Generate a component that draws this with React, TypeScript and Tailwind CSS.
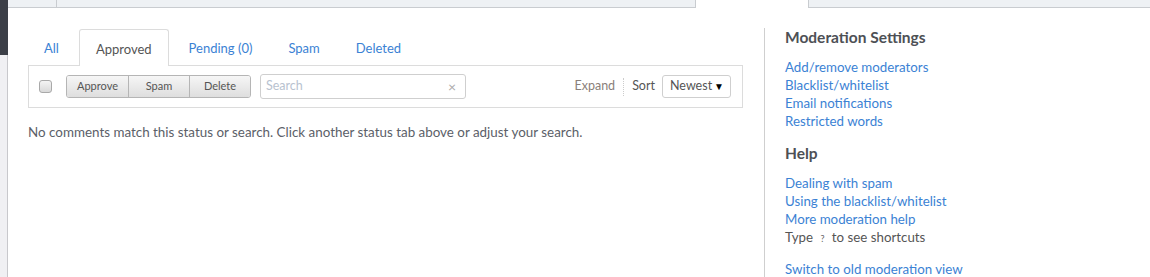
const font = { fontFamily: "Lato, 'Open Sans', sans-serif" }

function Tab({ label, active }: { label: string; active?: boolean }) {
  if (active)
    return (
      <div className="-mb-px flex h-[37px] items-center rounded-t-[3px] border border-b-0 border-[#dcdcdc] bg-white px-4 pt-[3px] text-[13px] text-[#555]">
        {label}
      </div>
    )
  return <div className="flex h-[36px] items-center px-4 pt-[3px] text-[13px] text-[#3b82d4]">{label}</div>
}

function SideLink({ children }: { children: React.ReactNode }) {
  return <a className="block text-[13.3px] leading-[18px] text-[#3b82d4]">{children}</a>
}

export default function App() {
  return (
    <div className="flex h-[277px] w-[1150px] overflow-hidden bg-white" style={font}>
      <div className="flex w-2 shrink-0 flex-col">
        <div className="h-[55px] bg-[#3c3f47]" />
        <div className="grow border-r border-[#c8c8cc] bg-[#f0f0f3]" />
      </div>

      <div className="flex grow flex-col">
        <div className="flex h-2 shrink-0">
          <div className="w-[49px] border-r border-b border-[#c9ccd0] bg-[#eef1f4]" />
          <div className="w-[639px] border-r border-b border-[#c9ccd0] bg-[#eef1f4]" />
          <div className="w-[112px]" />
          <div className="grow border-b border-l border-[#c9ccd0] bg-[#eef1f4]" />
        </div>

        <div className="flex grow">
          <div className="w-[756px] shrink-0 pt-[21px] pl-5 pr-[21px]">
            <div className="flex gap-1">
              <Tab label="All" />
              <Tab label="Approved" active />
              <Tab label="Pending (0)" />
              <Tab label="Spam" />
              <Tab label="Deleted" />
            </div>
            <div className="flex h-[43px] items-center border border-[#dcdcdc] pl-[10px] pr-[11px]">
              <span className="h-[13px] w-[13px] shrink-0 rounded-[3px] border border-[#a9a9a9] bg-gradient-to-b from-[#f4f4f4] to-[#d9d9d9]" />
              <div className="ml-[14px] flex h-[23px] shrink-0 overflow-hidden rounded-[3px] border border-[#b5b5b5] text-[11px] text-[#555]">
                {["Approve", "Spam", "Delete"].map((b, i) => (
                  <div
                    key={b}
                    className={`flex w-[61px] items-center justify-center bg-gradient-to-b from-[#f6f6f6] to-[#dedede] ${i > 0 ? "border-l border-[#b5b5b5]" : ""}`}
                  >
                    {b}
                  </div>
                ))}
              </div>
              <div className="ml-[9px] flex h-[25px] w-[206px] shrink-0 items-center justify-between rounded-[3px] border border-[#cfcfcf] pr-[9px] pl-[5px]">
                <span className="text-[12.5px] text-[#b8c2cf]">Search</span>
                <span className="text-[14px] leading-none text-[#aaa]">×</span>
              </div>
              <div className="grow" />
              <span className="text-[12.5px] text-[#8a7f7a]">Expand</span>
              <span className="mx-2 h-[18px] border-l border-dotted border-[#ccc]" />
              <span className="text-[12.5px] text-[#555]">Sort</span>
              <div className="ml-[7px] flex h-[23px] w-[69px] shrink-0 items-center justify-between rounded-[3px] border border-[#cfcfcf] pr-[6px] pl-[7px] text-[12.5px] text-[#555]">
                <span>Newest</span>
                <span className="text-[10px] text-black">▼</span>
              </div>
            </div>
            <p className="mt-[14px] text-[13.4px] text-[#5b6068]">
              No comments match this status or search. Click another status tab above or adjust your search.
            </p>
          </div>

          <div className="mt-5 grow border-l border-[#cfcfcf] pl-5">
            <h3 className="text-[15.5px] font-bold leading-[18px] text-[#4d5055]">Moderation Settings</h3>
            <div className="mt-[12px]">
              <SideLink>Add/remove moderators</SideLink>
              <SideLink>Blacklist/whitelist</SideLink>
              <SideLink>Email notifications</SideLink>
              <SideLink>Restricted words</SideLink>
            </div>
            <h3 className="mt-[14px] text-[15.5px] font-bold leading-[18px] text-[#4d5055]">Help</h3>
            <div className="mt-[12px]">
              <SideLink>Dealing with spam</SideLink>
              <SideLink>Using the blacklist/whitelist</SideLink>
              <SideLink>More moderation help</SideLink>
              <p className="text-[13.3px] leading-[18px] text-[#555]">
                Type <span className="mx-1 text-[9px] text-[#666]">?</span> to see shortcuts
              </p>
            </div>
            <div className="mt-[12px]">
              <SideLink>Switch to old moderation view</SideLink>
            </div>
          </div>
        </div>
      </div>
    </div>
  )
}
